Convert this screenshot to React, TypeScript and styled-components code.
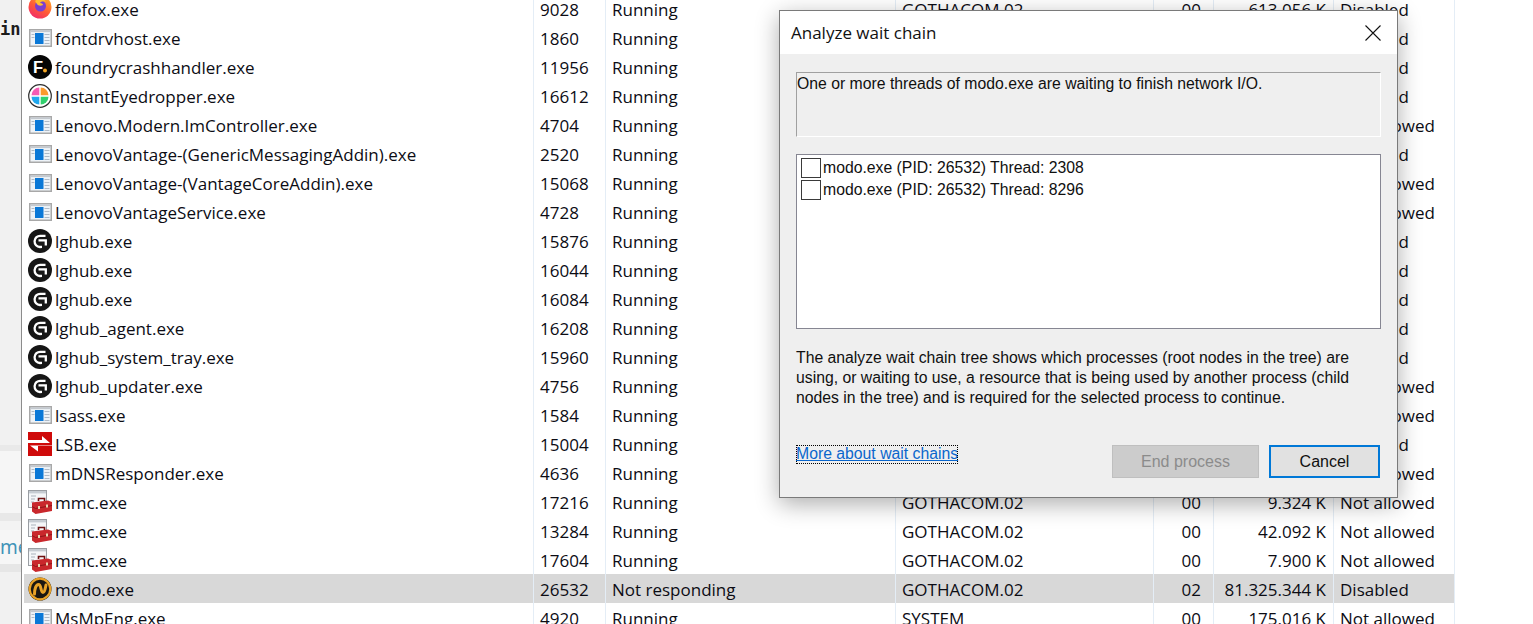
import React from "react";
import styled, { createGlobalStyle } from "styled-components";

const Global = createGlobalStyle`
  html, body { margin: 0; padding: 0; height: 100%; overflow: hidden; background: #fff; }
  #root { height: 100%; }
`;

const Page = styled.div`
  position: relative;
  display: flex;
  width: 100%;
  height: 100vh;
  overflow: hidden;
  background: #fff;
`;

const Gutter = styled.aside`
  width: 21px;
  flex: none;
  display: flex;
  flex-direction: column;
  overflow: hidden;
  background: #f1f1f1;
  border-right: 1px solid #8c8c8c;
`;

const GutterCode = styled.div`
  margin-top: 19px;
  height: 21px;
  flex: none;
  font: 700 17px/21px "DejaVu Sans Mono", monospace;
  color: #1c1c1c;
  white-space: nowrap;
`;

const GutterBand = styled.div<{ $h: number; $bg: string }>`
  flex: none;
  height: ${(p) => p.$h}px;
  background: ${(p) => p.$bg};
`;

const GutterLink = styled.div`
  flex: none;
  height: 34px;
  font: 400 19px/34px "Noto Sans", sans-serif;
  color: #3f93b8;
  background: #f6f6f6;
  white-space: nowrap;
`;

const Table = styled.main`
  margin-left: 2px;
  margin-top: -6px;
  width: 1430px;
  flex: none;
  border-right: 1px solid #e4edf6;
  align-self: flex-start;
`;

const Row = styled.div<{ $selected?: boolean }>`
  display: grid;
  grid-template-columns: 509px 72px 290px 258px 60px 120px 120px;
  height: 29px;
  background: ${(p) => (p.$selected ? "#d8d8d8" : "transparent")};
  font: 400 17px/32px "Open Sans", "Noto Sans", sans-serif;
  color: #0c0c14;
`;

const Cell = styled.div<{ $right?: boolean; $pr?: number }>`
  box-sizing: border-box;
  border-left: 1px solid #e4edf6;
  padding: 0 ${(p) => p.$pr ?? 0}px 0 6px;
  text-align: ${(p) => (p.$right ? "right" : "left")};
  white-space: nowrap;
  overflow: hidden;
`;

const NameCell = styled.div`
  display: flex;
  align-items: center;
  gap: 3px;
  padding-left: 4px;
  white-space: nowrap;
  overflow: hidden;
`;

const NameText = styled.span`
  margin-top: 2px;
`;

const IconBox = styled.span`
  flex: none;
  display: flex;
  align-items: center;
  justify-content: center;
  width: 24px;
  height: 29px;
`;

const Dialog = styled.section`
  position: absolute;
  left: 779px;
  top: 10px;
  box-sizing: border-box;
  width: 619px;
  height: 488px;
  display: flex;
  flex-direction: column;
  border: 1px solid #7a7a7a;
  background: #efefef;
  box-shadow: 0 6px 22px rgba(0, 0, 0, 0.32);
  font: 400 15.77px/20px "Liberation Sans", Arial, sans-serif;
  color: #101010;
`;

const TitleBar = styled.header`
  flex: none;
  height: 43px;
  display: flex;
  align-items: center;
  justify-content: space-between;
  padding: 0 16px 0 11px;
  background: #fff;
  font: 400 17px/43px "Open Sans", "Noto Sans", sans-serif;
  color: #111;
`;

const Body = styled.div`
  flex: 1;
  display: flex;
  flex-direction: column;
  padding: 18px 16px 0;
`;

const Summary = styled.div`
  box-sizing: border-box;
  height: 65px;
  flex: none;
  padding: 1px 0 0 0;
  border-top: 1px solid #a0a0a0;
  border-left: 1px solid #a0a0a0;
  border-right: 1px solid #fff;
  border-bottom: 1px solid #fff;
`;

const ThreadList = styled.div`
  box-sizing: border-box;
  height: 175px;
  flex: none;
  margin-top: 17px;
  padding: 2px 4px;
  border: 1px solid #868692;
  background: #fff;
`;

const Thread = styled.div`
  display: flex;
  align-items: center;
  gap: 2px;
  height: 22px;
`;

const Box = styled.span`
  box-sizing: border-box;
  flex: none;
  width: 20px;
  height: 20px;
  border: 1px solid #3a3a3a;
`;

const Help = styled.p`
  margin: 19px 0 0;
  line-height: 20px;
`;

const Footer = styled.footer`
  display: flex;
  justify-content: space-between;
  align-items: flex-start;
  margin-top: 37px;
  padding-right: 1px;
`;

const HelpLink = styled.a`
  box-sizing: border-box;
  height: 19px;
  line-height: 18px;
  color: #0a66cc;
  text-decoration: underline;
  outline: 1px dotted #000;
  outline-offset: -1px;
  white-space: nowrap;
`;

const Actions = styled.div`
  display: flex;
  gap: 10px;
`;

const Btn = styled.button<{ $primary?: boolean }>`
  box-sizing: border-box;
  height: 33px;
  width: ${(p) => (p.$primary ? 111 : 147)}px;
  padding: 0;
  font: 400 16px/20px "Liberation Sans", Arial, sans-serif;
  background: ${(p) => (p.$primary ? "#e1e1e1" : "#cccccc")};
  color: ${(p) => (p.$primary ? "#101010" : "#8b8b8b")};
  border: ${(p) => (p.$primary ? "2px solid #0078d7" : "1px solid #bfbfbf")};
`;

const CloseBtn = styled.span`
  display: flex;
  width: 16px;
  height: 16px;
`;

const Exe = () => (
  <svg width="23" height="18" viewBox="0 0 23 18">
    <rect x="0.75" y="0.75" width="21.5" height="16.5" fill="#eef3f8" stroke="#a8a8a8" strokeWidth="1.5" />
    <rect x="1.5" y="1.5" width="20" height="1.6" fill="#c4c9cf" />
    <rect x="6" y="4" width="8.5" height="11" fill="#0a78d7" />
    <path d="M2.5 5.5h3M2.5 8.5h3M15.5 5.5h5M15.5 8.5h5M15.5 11.5h5M15.5 14.5h5" stroke="#aeb9c6" strokeWidth="1" />
  </svg>
);

const Firefox = () => (
  <svg width="24" height="24" viewBox="0 0 24 24" style={{ marginTop: -3 }}>
    <defs>
      <linearGradient id="ff" x1="0.8" y1="0" x2="0.2" y2="1">
        <stop offset="0" stopColor="#ffb326" />
        <stop offset="0.55" stopColor="#ff5a36" />
        <stop offset="1" stopColor="#f0286e" />
      </linearGradient>
    </defs>
    <circle cx="12" cy="12" r="11.5" fill="url(#ff)" />
    <circle cx="12.5" cy="11" r="5.5" fill="#7b3fd0" />
    <path d="M7 6c3-3 9-3 11 1-3-1.5-5-.5-6 1 2 0 3 1 3 2-2 1-5 1-6-1-.7-1-1.5-2-2-3z" fill="#ffbd2e" />
  </svg>
);

const Foundry = () => (
  <svg width="24" height="24" viewBox="0 0 24 24">
    <circle cx="12" cy="12" r="12" fill="#050505" />
    <text x="5" y="18" fontFamily="Liberation Sans, sans-serif" fontWeight="700" fontSize="16.5" fill="#fff">F</text>
    <circle cx="17" cy="15.5" r="2" fill="#f5a623" />
  </svg>
);

const Eyedropper = () => (
  <svg width="24" height="24" viewBox="0 0 24 24">
    <circle cx="12" cy="12" r="11.3" fill="#fff" stroke="#2e2e2e" strokeWidth="1.2" />
    <path d="M11.3 3.5V11.3H3.5A8 8 0 0 1 11.3 3.5z" fill="#f45cb4" />
    <path d="M12.7 3.5A8 8 0 0 1 20.5 11.3H12.7z" fill="#fb9a2c" />
    <path d="M3.5 12.7H11.3V20.5A8 8 0 0 1 3.5 12.7z" fill="#21a8ee" />
    <path d="M12.7 12.7H20.5A8 8 0 0 1 12.7 20.5z" fill="#31d16e" />
  </svg>
);

const LogiG = () => (
  <svg width="24" height="24" viewBox="0 0 24 24">
    <circle cx="12" cy="12" r="12" fill="#161616" />
    <path d="M17.5 6.8H12.5a5.6 5.6 0 0 0-.6 11.2l2.1-.1" fill="none" stroke="#fff" strokeWidth="2.3" />
    <path d="M10.5 11.4H17.8V16.5" fill="none" stroke="#fff" strokeWidth="2.3" />
  </svg>
);

const Lsb = () => (
  <svg width="24" height="24" viewBox="0 0 24 24">
    <rect width="24" height="24" fill="#cf0a0a" />
    <path d="M0 8H14V4L22 11H0z" fill="#fff" />
    <path d="M24 14H10V19.5L2 13.4H24z" fill="#fff" />
  </svg>
);

const Mmc = () => (
  <svg width="24" height="24" viewBox="0 0 24 24">
    <rect x="0.5" y="0.5" width="18" height="17" fill="#f4f6f8" stroke="#9a9ea3" />
    <rect x="1" y="1" width="17" height="2.4" fill="#c6ccd2" />
    <path d="M3 6h5M3 9h4M3 12h3" stroke="#aab2bb" />
    <path d="M10.5 11V8.5h6V11" fill="none" stroke="#6f1212" strokeWidth="1.6" />
    <path d="M4 12.5l16-2 4 1.5v9l-16.5 3-3.5-2.5z" fill="#c9282c" />
    <path d="M4 16.5l3.5 2 16.5-3" fill="none" stroke="#8f1519" strokeWidth="1" />
    <rect x="10" y="16" width="2" height="3" fill="#e8d6b0" />
    <rect x="18" y="14.5" width="2" height="3" fill="#e8d6b0" />
  </svg>
);

const Modo = () => (
  <svg width="24" height="24" viewBox="0 0 24 24">
    <circle cx="12" cy="12" r="11.5" fill="#1b1712" />
    <circle cx="12" cy="12" r="10.3" fill="none" stroke="#e9a227" strokeWidth="2.2" />
    <path d="M6.5 17c0-5 1.5-9.5 4-9.5 3 0 2 8 4.5 8 1.5 0 2-3 3-7.5" fill="none" stroke="#e9a227" strokeWidth="3" strokeLinecap="round" />
  </svg>
);

type RowData = {
  icon: React.ReactNode;
  name: string;
  pid: string;
  status?: string;
  user?: string;
  cpu?: string;
  mem?: string;
  uac: string;
  selected?: boolean;
};

const D = "Disabled";
const N = "Not allowed";

const rows: RowData[] = [
  { icon: <Firefox />, name: "firefox.exe", pid: "9028", user: "GOTHACOM.02", cpu: "00", mem: "613.056 K", uac: D },
  { icon: <Exe />, name: "fontdrvhost.exe", pid: "1860", uac: D },
  { icon: <Foundry />, name: "foundrycrashhandler.exe", pid: "11956", uac: D },
  { icon: <Eyedropper />, name: "InstantEyedropper.exe", pid: "16612", uac: D },
  { icon: <Exe />, name: "Lenovo.Modern.ImController.exe", pid: "4704", uac: N },
  { icon: <Exe />, name: "LenovoVantage-(GenericMessagingAddin).exe", pid: "2520", uac: D },
  { icon: <Exe />, name: "LenovoVantage-(VantageCoreAddin).exe", pid: "15068", uac: N },
  { icon: <Exe />, name: "LenovoVantageService.exe", pid: "4728", uac: N },
  { icon: <LogiG />, name: "lghub.exe", pid: "15876", uac: D },
  { icon: <LogiG />, name: "lghub.exe", pid: "16044", uac: D },
  { icon: <LogiG />, name: "lghub.exe", pid: "16084", uac: D },
  { icon: <LogiG />, name: "lghub_agent.exe", pid: "16208", uac: D },
  { icon: <LogiG />, name: "lghub_system_tray.exe", pid: "15960", uac: D },
  { icon: <LogiG />, name: "lghub_updater.exe", pid: "4756", uac: N },
  { icon: <Exe />, name: "lsass.exe", pid: "1584", uac: N },
  { icon: <Lsb />, name: "LSB.exe", pid: "15004", uac: D },
  { icon: <Exe />, name: "mDNSResponder.exe", pid: "4636", uac: N },
  { icon: <Mmc />, name: "mmc.exe", pid: "17216", user: "GOTHACOM.02", cpu: "00", mem: "9.324 K", uac: N },
  { icon: <Mmc />, name: "mmc.exe", pid: "13284", user: "GOTHACOM.02", cpu: "00", mem: "42.092 K", uac: N },
  { icon: <Mmc />, name: "mmc.exe", pid: "17604", user: "GOTHACOM.02", cpu: "00", mem: "7.900 K", uac: N },
  { icon: <Modo />, name: "modo.exe", pid: "26532", status: "Not responding", user: "GOTHACOM.02", cpu: "02", mem: "81.325.344 K", uac: D, selected: true },
  { icon: <Exe />, name: "MsMpEng.exe", pid: "4920", user: "SYSTEM", cpu: "00", mem: "175.016 K", uac: N },
];

export default function App() {
  return (
    <Page>
      <Global />
      <Gutter>
        <GutterCode>in,</GutterCode>
        <GutterBand $h={405} $bg="#f1f1f1" />
        <GutterBand $h={6} $bg="#e9e9e9" />
        <GutterBand $h={62} $bg="#f6f6f6" />
        <GutterBand $h={8} $bg="#e8e8e8" />
        <GutterBand $h={9} $bg="#f3f3f3" />
        <GutterLink>me</GutterLink>
        <GutterBand $h={8} $bg="#e6e6e6" />
      </Gutter>
      <Table>
        {rows.map((r) => (
          <Row key={r.pid} $selected={r.selected}>
            <NameCell>
              <IconBox>{r.icon}</IconBox>
              <NameText>{r.name}</NameText>
            </NameCell>
            <Cell>{r.pid}</Cell>
            <Cell>{r.status ?? "Running"}</Cell>
            <Cell>{r.user}</Cell>
            <Cell $right $pr={12}>{r.cpu}</Cell>
            <Cell $right $pr={7}>{r.mem}</Cell>
            <Cell>{r.uac}</Cell>
          </Row>
        ))}
      </Table>
      <Dialog>
        <TitleBar>
          Analyze wait chain
          <CloseBtn>
            <svg width="16" height="16" viewBox="0 0 16 16">
              <path d="M0.5 0.5L15.5 15.5M15.5 0.5L0.5 15.5" stroke="#111" strokeWidth="1.1" />
            </svg>
          </CloseBtn>
        </TitleBar>
        <Body>
          <Summary>One or more threads of modo.exe are waiting to finish network I/O.</Summary>
          <ThreadList>
            <Thread><Box />modo.exe (PID: 26532) Thread: 2308</Thread>
            <Thread><Box />modo.exe (PID: 26532) Thread: 8296</Thread>
          </ThreadList>
          <Help>
            The analyze wait chain tree shows which processes (root nodes in the tree) are<br />
            using, or waiting to use, a resource that is being used by another process (child<br />
            nodes in the tree) and is required for the selected process to continue.
          </Help>
          <Footer>
            <HelpLink href="#">More about wait chains</HelpLink>
            <Actions>
              <Btn disabled>End process</Btn>
              <Btn $primary>Cancel</Btn>
            </Actions>
          </Footer>
        </Body>
      </Dialog>
    </Page>
  );
}
